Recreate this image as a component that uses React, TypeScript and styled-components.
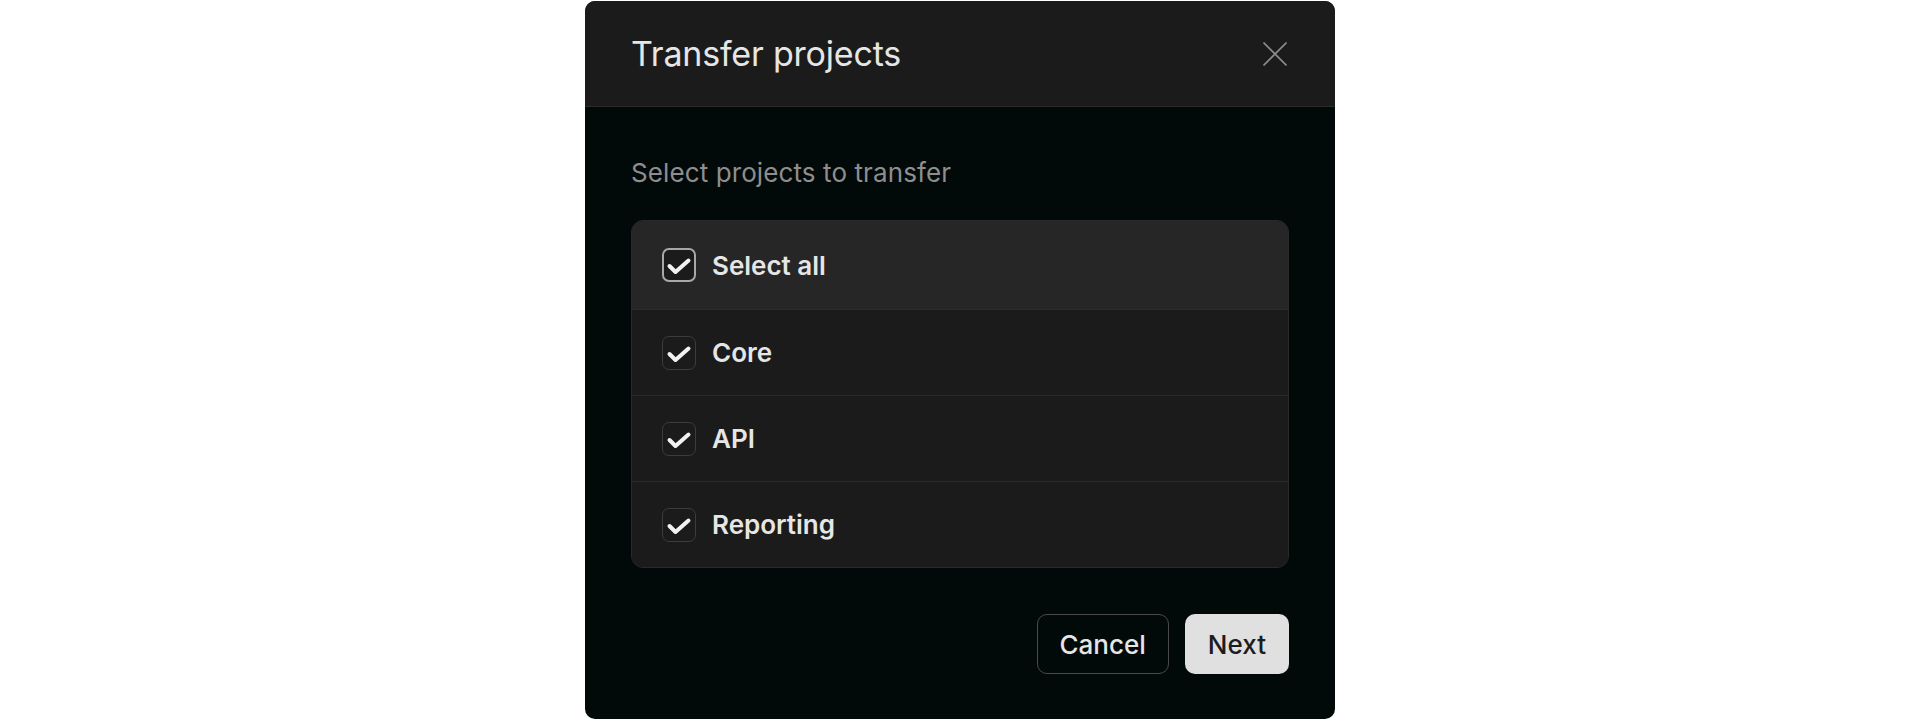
import { createGlobalStyle } from 'styled-components';
import styled from 'styled-components';

const GlobalStyle = createGlobalStyle`
  html, body {
    margin: 0;
    padding: 0;
    background: #ffffff;
    font-family: Inter, 'Noto Sans', sans-serif;
  }
`;

const Page = styled.div`
  padding-top: 1px;
  display: flex;
  justify-content: center;
`;

const Dialog = styled.div`
  width: 750px;
  box-sizing: border-box;
  border-radius: 10px;
  overflow: hidden;
  background: #020909;
  display: flex;
  flex-direction: column;
`;

const Header = styled.div`
  height: 106px;
  box-sizing: border-box;
  padding: 0 46px 0 46px;
  display: flex;
  align-items: center;
  justify-content: space-between;
  background: #1b1b1b;
  border-bottom: 1px solid #2b2b2b;
`;

const Title = styled.h2`
  margin: 0;
  font-size: 34px;
  font-weight: 400;
  color: #e6e6e6;
  letter-spacing: -0.2px;
`;

const CloseButton = styled.button`
  width: 24px;
  height: 24px;
  padding: 0;
  margin-right: 2px;
  border: none;
  background: none;
  color: #8a8a8a;
  display: flex;
  cursor: pointer;
`;

const Body = styled.div`
  padding: 46px 46px 45px;
  display: flex;
  flex-direction: column;
`;

const Subtitle = styled.p`
  margin: 0 0 28px;
  font-size: 26px;
  line-height: 39px;
  letter-spacing: 0.1px;
  color: #8e8e8e;
`;

const List = styled.div`
  border: 1px solid #2a2a2a;
  border-radius: 12px;
  overflow: hidden;
  background: #1b1b1b;
`;

const Row = styled.label<{ $header?: boolean }>`
  height: 86px;
  box-sizing: border-box;
  padding: 0 30px;
  display: flex;
  align-items: center;
  gap: 16px;
  background: ${(p) => (p.$header ? '#262626' : '#1b1b1b')};
  & + & {
    border-top: 1px solid #2a2a2a;
  }
  &:first-child {
    height: 88px;
  }
`;

const Box = styled.span<{ $strong?: boolean }>`
  position: absolute;
  inset: 0;
  box-sizing: border-box;
  border-radius: 7px;
  border: ${(p) => (p.$strong ? '2px solid #a8a8a8' : '1px solid #3c3c3c')};
  background: #1b1b1b;
`;

const CheckWrap = styled.span`
  position: relative;
  width: 34px;
  height: 34px;
  flex: none;
  display: flex;
`;

const Label = styled.span`
  font-size: 26px;
  font-weight: 600;
  color: #e6e6e6;
`;

const Footer = styled.div`
  margin-top: 46px;
  display: flex;
  justify-content: flex-end;
  gap: 16px;
`;

const Button = styled.button<{ $primary?: boolean }>`
  height: 60px;
  box-sizing: border-box;
  padding: 0 ${(p) => (p.$primary ? '23px' : '22px')};
  border-radius: 10px;
  font-family: Inter, 'Noto Sans', sans-serif;
  font-size: 26px;
  font-weight: 500;
  cursor: pointer;
  border: ${(p) => (p.$primary ? 'none' : '1px solid #4a4a4a')};
  background: ${(p) => (p.$primary ? '#e0e0e0' : 'transparent')};
  color: ${(p) => (p.$primary ? '#1c1c1c' : '#e6e6e6')};
`;

function Check() {
  return (
    <svg width='34' height='34' viewBox='0 0 34 34' style={{ position: 'relative' }}>
      <path
        d='M7.5 18 L13.5 24 L26.5 12.5'
        fill='none'
        stroke='#f2f2f2'
        strokeWidth='4'
        strokeLinecap='round'
        strokeLinejoin='round'
      />
    </svg>
  );
}

const projects = ['Core', 'API', 'Reporting'];

export default function App() {
  return (
    <Page>
      <GlobalStyle />
      <Dialog>
        <Header>
          <Title>Transfer projects</Title>
          <CloseButton aria-label='Close'>
            <svg width='24' height='24' viewBox='0 0 24 24'>
              <path d='M0.5 0.5 L23.5 23.5 M23.5 0.5 L0.5 23.5' stroke='currentColor' strokeWidth='1.6' />
            </svg>
          </CloseButton>
        </Header>
        <Body>
          <Subtitle>Select projects to transfer</Subtitle>
          <List>
            <Row $header>
              <CheckWrap>
                <Box $strong />
                <Check />
              </CheckWrap>
              <Label>Select all</Label>
            </Row>
            {projects.map((name) => (
              <Row key={name}>
                <CheckWrap>
                  <Box />
                  <Check />
                </CheckWrap>
                <Label>{name}</Label>
              </Row>
            ))}
          </List>
          <Footer>
            <Button>Cancel</Button>
            <Button $primary>Next</Button>
          </Footer>
        </Body>
      </Dialog>
    </Page>
  );
}
